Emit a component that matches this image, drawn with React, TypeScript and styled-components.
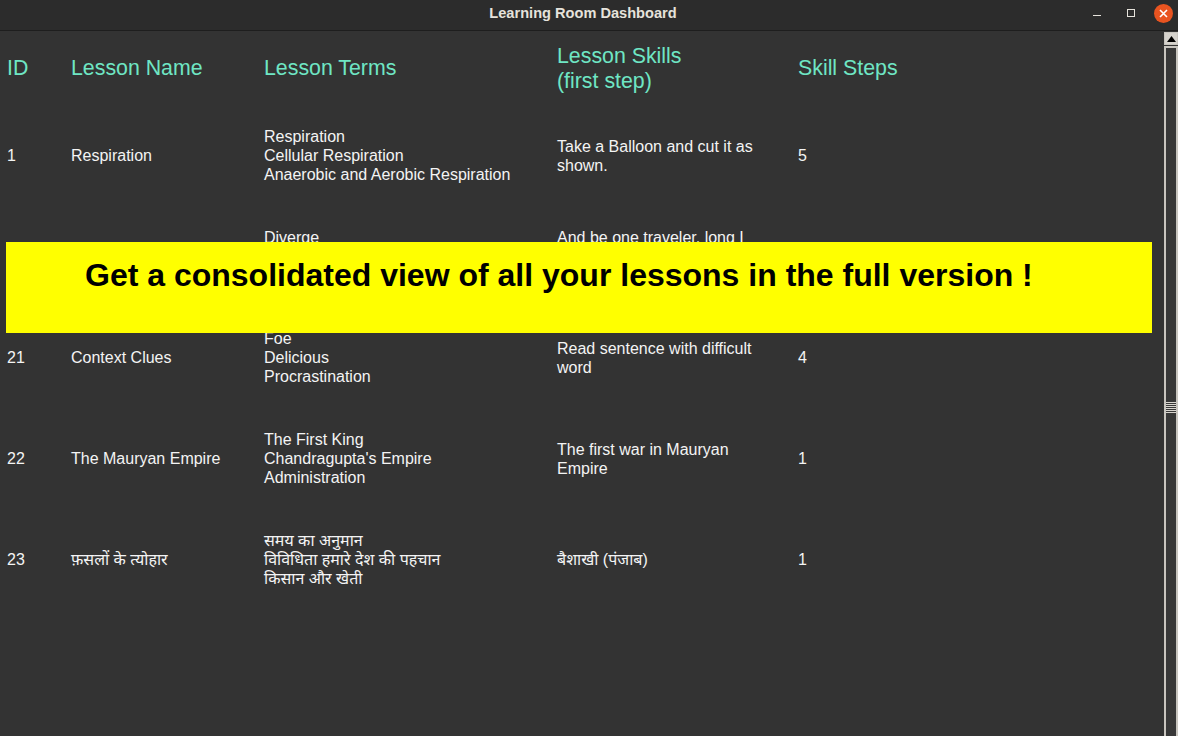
import React from "react";
import styled, { createGlobalStyle } from "styled-components";

const GlobalStyle = createGlobalStyle`
  html, body {
    margin: 0;
    padding: 0;
    background: #333333;
    overflow: hidden;
  }
  * { box-sizing: border-box; }
`;

const Window = styled.div`
  width: 1178px;
  height: 736px;
  display: flex;
  flex-direction: column;
  background: #333333;
  font-family: "Liberation Sans", Arial, sans-serif;
`;

const TitleBar = styled.div`
  height: 31px;
  flex: none;
  display: grid;
  grid-template-columns: 1fr auto 1fr;
  align-items: center;
  background: #2c2c2c;
  border-bottom: 1px solid #1e1e1e;
`;

const Title = styled.div`
  grid-column: 2;
  font-family: "Liberation Sans", Arial, sans-serif;
  font-weight: bold;
  font-size: 14.6px;
  color: #e6e3dc;
  padding-right: 12px;
  padding-bottom: 4px;
`;

const Controls = styled.div`
  grid-column: 3;
  justify-self: end;
  display: flex;
  align-items: center;
  padding-bottom: 4px;
`;

const CtrlButton = styled.div<{ $w: number }>`
  width: ${(p) => p.$w}px;
  height: 22px;
  display: flex;
  align-items: center;
  justify-content: center;
`;

const MinLine = styled.div`
  width: 8px;
  height: 1px;
  background: #e6e3dc;
  margin-top: 4px;
`;

const MaxBox = styled.div`
  width: 8px;
  height: 8px;
  border: 1px solid #e6e3dc;
`;

const CloseCircle = styled.div`
  width: 19px;
  height: 19px;
  border-radius: 50%;
  background: #e95420;
  display: flex;
  align-items: center;
  justify-content: center;
`;

const Body = styled.div`
  flex: 1;
  display: flex;
  min-height: 0;
`;

const Content = styled.div`
  flex: 1;
  position: relative;
  overflow: hidden;
`;

const Table = styled.div`
  display: flex;
  flex-direction: column;
  padding-left: 7px;
  padding-top: 1px;
`;

const Row = styled.div<{ $h: number }>`
  display: grid;
  grid-template-columns: 64px 193px 293px 241px 1fr;
  align-items: center;
  height: ${(p) => p.$h}px;
`;

const HeadCell = styled.div`
  font-size: 21.33px;
  line-height: 25px;
  color: #6fe6c4;
  white-space: pre-line;
`;

const Cell = styled.div<{ $wrap?: number }>`
  font-family: "Liberation Sans", Arial, "Noto Sans", sans-serif;
  font-size: 16px;
  line-height: 19px;
  color: #f4f4f4;
  white-space: pre-line;
  max-width: ${(p) => (p.$wrap ? `${p.$wrap}px` : "none")};
`;

const Banner = styled.div`
  position: absolute;
  left: 6px;
  top: 211px;
  width: 1146px;
  height: 91px;
  background: #ffff00;
  padding: 15px 0 0 79px;
  font-family: "Liberation Sans", Arial, sans-serif;
  font-weight: bold;
  font-size: 32px;
  line-height: 37px;
  color: #000000;
  white-space: nowrap;
`;

const Scrollbar = styled.div`
  width: 14px;
  flex: none;
  display: flex;
  flex-direction: column;
  padding-top: 1px;
  background: #333333;
`;

const ArrowButton = styled.div`
  height: 13px;
  border: 1px solid #c8c5bf;
  background: #d6d3cd;
  display: flex;
  align-items: center;
  justify-content: center;
`;

const Thumb = styled.div`
  flex: 1;
  margin-top: 1px;
  border-left: 2px solid #c8c5bf;
  border-right: 2px solid #c8c5bf;
  border-top: 2px solid #c8c5bf;
  background: #383838;
  display: flex;
  flex-direction: column;
  align-items: stretch;
  padding-top: 354px;
`;

const Grip = styled.div`
  height: 12px;
  background: repeating-linear-gradient(
    to bottom,
    #d8d5cf 0px,
    #d8d5cf 1px,
    #383838 1px,
    #383838 2px
  );
`;

type Lesson = {
  id: string;
  name: string;
  terms: string;
  skill: string;
  steps: string;
};

const lessons: Lesson[] = [
  {
    id: "1",
    name: "Respiration",
    terms: "Respiration\nCellular Respiration\nAnaerobic and Aerobic Respiration",
    skill: "Take a Balloon and cut it as shown.",
    steps: "5",
  },
  {
    id: "20",
    name: "The Road Not Taken",
    terms: "Diverge\nUndergrowth\nTrodden",
    skill: "And be one traveler, long I stood And looked down one as far as I could",
    steps: "3",
  },
  {
    id: "21",
    name: "Context Clues",
    terms: "Foe\nDelicious\nProcrastination",
    skill: "Read sentence with difficult word",
    steps: "4",
  },
  {
    id: "22",
    name: "The Mauryan Empire",
    terms: "The First King\nChandragupta's Empire\nAdministration",
    skill: "The first war in Mauryan Empire",
    steps: "1",
  },
  {
    id: "23",
    name: "फ़सलों के त्योहार",
    terms: "समय का अनुमान\nविविधिता हमारे देश की पहचान\nकिसान और खेती",
    skill: "बैशाखी (पंजाब)",
    steps: "1",
  },
];

export default function App() {
  return (
    <>
      <GlobalStyle />
      <Window>
        <TitleBar>
          <Title>Learning Room Dashboard</Title>
          <Controls>
            <CtrlButton $w={34}>
              <MinLine />
            </CtrlButton>
            <CtrlButton $w={34}>
              <MaxBox />
            </CtrlButton>
            <CtrlButton $w={30}>
              <CloseCircle>
                <svg width="9" height="9" viewBox="0 0 9 9">
                  <path d="M1 1 L8 8 M8 1 L1 8" stroke="#ffffff" strokeWidth="1.6" />
                </svg>
              </CloseCircle>
            </CtrlButton>
          </Controls>
        </TitleBar>
        <Body>
          <Content>
            <Table>
              <Row $h={73}>
                <HeadCell>ID</HeadCell>
                <HeadCell>Lesson Name</HeadCell>
                <HeadCell>Lesson Terms</HeadCell>
                <HeadCell>{"Lesson Skills\n(first step)"}</HeadCell>
                <HeadCell>Skill Steps</HeadCell>
              </Row>
              {lessons.map((l) => (
                <Row $h={101} key={l.id}>
                  <Cell>{l.id}</Cell>
                  <Cell>{l.name}</Cell>
                  <Cell>{l.terms}</Cell>
                  <Cell $wrap={205}>{l.skill}</Cell>
                  <Cell>{l.steps}</Cell>
                </Row>
              ))}
            </Table>
            <Banner>Get a consolidated view of all your lessons in the full version !</Banner>
          </Content>
          <Scrollbar>
            <ArrowButton>
              <svg width="9" height="6" viewBox="0 0 9 6">
                <path d="M0 6 L4.5 0 L9 6 Z" fill="#000000" />
              </svg>
            </ArrowButton>
            <Thumb>
              <Grip />
            </Thumb>
          </Scrollbar>
        </Body>
      </Window>
    </>
  );
}
